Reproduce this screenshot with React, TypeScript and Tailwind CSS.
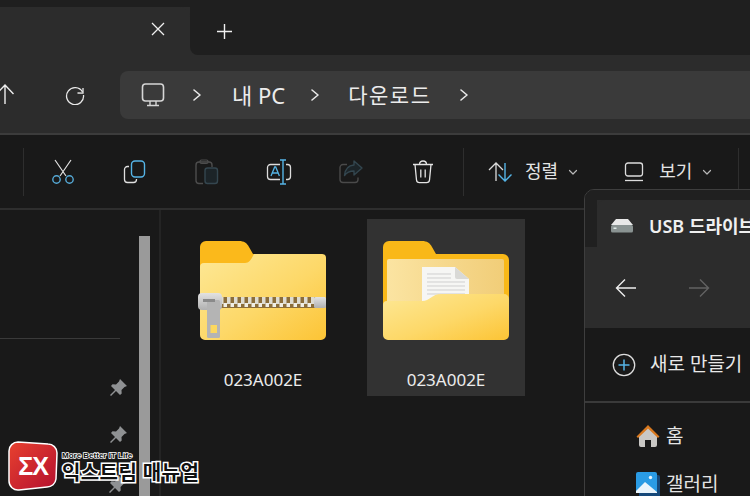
const sans = "font-['Noto_Sans','Noto_Sans_CJK_KR',sans-serif]";

function Chevron({ className = "" }: { className?: string }) {
  return (
    <svg width="10" height="14" viewBox="0 0 10 14" fill="none" className={className}>
      <path d="M2 2l6 5-6 5" stroke="#e8e8e8" strokeWidth="1.6" strokeLinecap="round" strokeLinejoin="round" />
    </svg>
  );
}

function SmallDown() {
  return (
    <svg width="10" height="7" viewBox="0 0 10 7" fill="none">
      <path d="M1.5 1.5L5 5l3.5-3.5" stroke="#b8b8b8" strokeWidth="1.2" strokeLinecap="round" strokeLinejoin="round" />
    </svg>
  );
}

function Divider() {
  return <div className="w-px h-[48px] bg-[#2e2e2e] shrink-0" />;
}

function Scissors() {
  return (
    <svg width="24" height="26" viewBox="0 0 24 26" fill="none">
      <path d="M4 1l11 16M20 1L9 17" stroke="#e0e0e0" strokeWidth="1.2" />
      <circle cx="5.5" cy="20.5" r="3.7" stroke="#55a9d6" strokeWidth="1.4" />
      <circle cx="18.5" cy="20.5" r="3.7" stroke="#55a9d6" strokeWidth="1.4" />
    </svg>
  );
}

function Copy() {
  return (
    <svg width="24" height="24" viewBox="0 0 24 24" fill="none">
      <path d="M6 6.5H4.5A3 3 0 0 0 1.5 9.5v10a3 3 0 0 0 3 3h6a3 3 0 0 0 3-3V19" stroke="#e0e0e0" strokeWidth="1.3" />
      <rect x="8.5" y="1" width="13" height="16" rx="3.5" stroke="#55b4e6" strokeWidth="1.4" />
    </svg>
  );
}

function Paste() {
  return (
    <svg width="24" height="26" viewBox="0 0 24 26" fill="none">
      <path d="M8 24.5H4a3 3 0 0 1-3-3V6a3 3 0 0 1 3-3h10a3 3 0 0 1 3 3v2" stroke="#4d4d4d" strokeWidth="1.4" />
      <rect x="5" y="1" width="8" height="3.5" rx="1.5" stroke="#4d4d4d" strokeWidth="1.2" />
      <rect x="10" y="9" width="12.5" height="15.5" rx="2.5" stroke="#34464f" strokeWidth="1.4" fill="#1c2428" />
    </svg>
  );
}

function Rename() {
  return (
    <svg width="26" height="26" viewBox="0 0 26 26" fill="none">
      <path d="M14 5.5H4.5a3 3 0 0 0-3 3v9a3 3 0 0 0 3 3H14M20 5.5h1.5a3 3 0 0 1 3 3v9a3 3 0 0 1-3 3H20" stroke="#dcdcdc" strokeWidth="1.3" />
      <path d="M14 1h6M17 1v24M14 25h6" stroke="#55b4e6" strokeWidth="1.4" />
      <path d="M5 17l3.7-9h1l3.7 9M6.3 14h6" stroke="#55b4e6" strokeWidth="1.3" />
    </svg>
  );
}

function Share() {
  return (
    <svg width="24" height="24" viewBox="0 0 24 24" fill="none">
      <path d="M8 4.500H4a3 3 0 0 0-3 3v12a3 3 0 0 0 3 3h12a3 3 0 0 0 3-3v-2" stroke="#4a4a4a" strokeWidth="1.4" />
      <path d="M15 1l8 7-8 7v-4c-4 0-7 1-9.500 4.500C6 10 9 5.500 15 5V1z" stroke="#33464f" strokeWidth="1.4" strokeLinejoin="round" fill="#1c2428" />
    </svg>
  );
}

function Trash() {
  return (
    <svg width="22" height="24" viewBox="0 0 22 24" fill="none">
      <path d="M1 4.500h20M7.500 4.500C7.500 2 9 1 11 1s3.500 1 3.500 3.500" stroke="#e4e4e4" strokeWidth="1.3" />
      <path d="M3 4.500l1.500 15.500a3 3 0 0 0 3 2.700h7a3 3 0 0 0 3-2.700L19 4.500" stroke="#e4e4e4" strokeWidth="1.3" />
      <path d="M8.800 9.500v8M13.200 9.500v8" stroke="#e4e4e4" strokeWidth="1.3" />
    </svg>
  );
}

function SortIcon() {
  return (
    <svg width="25" height="20" viewBox="0 0 25 20" fill="none">
      <path d="M8 19V1M1 8l7-7 7 7" stroke="#dcdcdc" strokeWidth="1.3" />
      <path d="M17 1v18M10.500 12.500l6.500 6.500 6.500-6.500" stroke="#55b4e6" strokeWidth="1.4" />
    </svg>
  );
}

function ViewIcon() {
  return (
    <svg width="20" height="20" viewBox="0 0 20 20" fill="none">
      <rect x="1.500" y="1" width="17" height="13" rx="2.500" stroke="#dcdcdc" strokeWidth="1.3" />
      <path d="M1 18.500h18" stroke="#dcdcdc" strokeWidth="1.3" />
    </svg>
  );
}

function Pin() {
  return (
    <svg width="18" height="18" viewBox="0 0 18 18" fill="#8f9193">
      <path d="M11 0l7 7-2.500 1-3 3 .2 3.500-1.700 1.500L7 12 2 17l-1-1 5-5-4-4 1.500-1.700L7 5.500l3-3z" />
    </svg>
  );
}

function ZipFolder() {
  return (
    <svg width="130" height="100" viewBox="-2 0 130 100" className="block">
      <defs>
        <linearGradient id="zipFront" x1="0" y1="0" x2="1" y2="1">
          <stop offset="0" stopColor="#fde896" />
          <stop offset="0.55" stopColor="#fdd868" />
          <stop offset="1" stopColor="#fcc435" />
        </linearGradient>
        <linearGradient id="metal" x1="0" y1="0" x2="0" y2="1">
          <stop offset="0" stopColor="#e2e2e2" />
          <stop offset="1" stopColor="#b0b0b0" />
        </linearGradient>
      </defs>
      <path d="M0 6a6 6 0 0 1 6-6h33c5 0 8 2 10 6l4 7h67a6 6 0 0 1 6 6v30H0z" fill="#fbb91b" />
      <path d="M0 26a4 4 0 0 1 4-4h41c4 0 6-3 9-9h68a4 4 0 0 1 4 4v77a5 5 0 0 1-5 5H5a5 5 0 0 1-5-5z" fill="url(#zipFront)" />
      <rect x="20" y="56" width="98" height="11" fill="#8b6d3a" />
      <path d="M20 59.500h98" stroke="#dedcd2" strokeWidth="7" strokeDasharray="3.500 3.500" />
      <path d="M20 64h98" stroke="#efeee6" strokeWidth="4" strokeDasharray="3.500 3.500" strokeDashoffset="3.500" />
      <rect x="114" y="56" width="12" height="11" rx="1.500" fill="url(#metal)" />
      <rect x="-2" y="52" width="24" height="17" rx="4" fill="url(#metal)" />
      <rect x="7" y="59" width="13" height="38" rx="1.500" fill="#b4b4b4" />
      <rect x="3" y="58" width="12" height="3" fill="#8a8a8a" />
      <rect x="10.500" y="84" width="6.500" height="8" fill="#fcd85e" />
    </svg>
  );
}

function OpenFolder() {
  return (
    <svg width="126" height="100" viewBox="0 0 126 100" className="block">
      <defs>
        <linearGradient id="openFront" x1="0" y1="0" x2="1" y2="1">
          <stop offset="0" stopColor="#fde896" />
          <stop offset="0.55" stopColor="#fdd868" />
          <stop offset="1" stopColor="#fcc435" />
        </linearGradient>
        <linearGradient id="paper" x1="0" y1="0" x2="1" y2="0">
          <stop offset="0" stopColor="#fbe4a2" />
          <stop offset="1" stopColor="#f1cd78" />
        </linearGradient>
      </defs>
      <path d="M0 6a6 6 0 0 1 6-6h33c5 0 8 2 10 6l4 7h67a6 6 0 0 1 6 6v60H0z" fill="#f9b818" />
      <rect x="4" y="18" width="117" height="50" rx="2" fill="url(#paper)" />
      <path d="M39 26h33l14 12v28H39z" fill="#f6f6f4" />
      <path d="M72 26l14 12H74a2 2 0 0 1-2-2z" fill="#d9d9d6" />
      <path d="M44 33h24M44 37h24M44 41h38M44 45h38M44 49h38M44 53h38" stroke="#cfcfcf" strokeWidth="1" />
      <path d="M0 64a4 4 0 0 1 4-4h35c8 0 10-7 19-7h63a5 5 0 0 1 5 5v36a5 5 0 0 1-5 5H5a5 5 0 0 1-5-5z" fill="url(#openFront)" />
    </svg>
  );
}

function DriveIcon() {
  return (
    <svg width="22" height="14" viewBox="0 0 22 14" fill="none">
      <path d="M5 0h12l5 6H0z" fill="#e8e8e8" />
      <rect y="6" width="22" height="7.500" rx="1.500" fill="#8a9392" />
      <rect x="2.500" y="8.500" width="3" height="1.500" fill="#dfe9e6" />
    </svg>
  );
}

function HomeIcon() {
  return (
    <svg width="24" height="24" viewBox="0 0 24 24" fill="none">
      <path d="M3 11.500L12 3l9 8.500V21a2 2 0 0 1-2 2h-4v-7H9v7H5a2 2 0 0 1-2-2z" fill="#c9c7c4" />
      <path d="M.5 12.500L12 1l11.500 11.500-1.500 1.500L12 4.500 2 14z" fill="#d9791f" />
    </svg>
  );
}

function GalleryIcon() {
  return (
    <svg width="24" height="24" viewBox="0 0 24 24" fill="none">
      <rect x="3" y="3" width="21" height="24" rx="2" fill="#16487a" />
      <rect width="21" height="21" rx="2" fill="#2a9be4" />
      <path d="M0 19l9-9 12 10v1H0z" fill="#eaf5fc" />
      <circle cx="14.500" cy="5.500" r="1.700" fill="#eaf5fc" />
    </svg>
  );
}

function Tile({ selected, children }: { selected?: boolean; children: React.ReactNode }) {
  return (
    <div className={`w-[158px] h-[177px] flex flex-col items-center pt-[22px] ${selected ? "bg-[#323232]" : ""}`}>
      <div className="h-[100px] flex justify-center">{children}</div>
      <div className="mt-[28px] text-[17px] leading-[22px] text-[#ececec]">023A002E</div>
    </div>
  );
}

export default function App() {
  return (
    <div className={`relative w-[750px] h-[496px] overflow-hidden bg-[#191919] ${sans}`}>
      {/* tab strip */}
      <div className="flex h-[55px] bg-[linear-gradient(#1f1f1f_7px,#2c2c2c_7px)]">
        <div className="w-[190px] h-[48px] mt-[7px] rounded-tr-[10px] bg-[#2c2c2c] flex items-center justify-end pr-[25px]">
          <svg width="14" height="14" viewBox="0 0 14 14" fill="none" className="mb-1">
            <path d="M1 1l12 12M13 1L1 13" stroke="#f0f0f0" strokeWidth="1.3" />
          </svg>
        </div>
        <div className="flex-1 bg-[#1f1f1f] rounded-bl-[8px] flex items-center pl-[27px] pt-[7px]">
          <svg width="15" height="15" viewBox="0 0 15 15" fill="none">
            <path d="M7.500 0v15M0 7.500h15" stroke="#f0f0f0" strokeWidth="1.4" />
          </svg>
        </div>
      </div>

      {/* nav bar */}
      <div className="relative h-[80px] pt-[2px] bg-[#2c2c2c] flex items-center pl-[120px] border-b-2 border-[#3c3c3c]">
        <svg width="20" height="20" viewBox="0 0 20 20" fill="none" className="absolute -left-[5px] top-[29px]">
          <path d="M10 20V1M1.500 10L10 1l8.500 9" stroke="#ededed" strokeWidth="1.4" />
        </svg>
        <svg width="20" height="20" viewBox="0 0 20 20" fill="none" className="absolute left-[65px] top-[30px]">
          <path d="M17.500 7A8.500 8.500 0 1 0 18.500 10" stroke="#e8e8e8" strokeWidth="1.3" />
          <path d="M12.500 3l5.500 .2V-2" stroke="#e8e8e8" strokeWidth="1.3" transform="translate(0 5)" />
        </svg>
        <div className="w-[630px] h-[48px] rounded-l-[8px] bg-[#3a3a3a] flex items-center text-[#ececec] leading-none">
          <svg width="24" height="24" viewBox="0 0 24 24" fill="none" className="ml-[21px]">
            <rect x="1.500" y="1" width="21" height="17" rx="3" stroke="#d6d6d6" strokeWidth="1.6" />
            <path d="M9 18v4M15 18v4M6 22.500h12" stroke="#d6d6d6" strokeWidth="1.4" />
          </svg>
          <Chevron className="ml-[27px]" />
          <span className="ml-[30px] text-[22px]">내 PC</span>
          <Chevron className="ml-[25px]" />
          <span className="ml-[28px] text-[21px] tracking-[1.5px]">다운로드</span>
          <Chevron className="ml-[28px]" />
        </div>
      </div>

      {/* command bar */}
      <div className="h-[75px] pl-[23px] flex items-center border-b-2 border-[#2e2e2e] text-[18px] text-[#e4e4e4]">
        <Divider />
        <div className="w-[3px]" />
        {[<Scissors key="cut" />, <Copy key="copy" />, <Paste key="paste" />, <Rename key="rename" />, <Share key="share" />, <Trash key="del" />].map((icon, i) => (
          <div key={i} className="w-[72px] flex justify-center">{icon}</div>
        ))}
        <div className="w-[4px]" />
        <Divider />
        <div className="ml-[24px] flex items-center">
          <SortIcon />
          <span className="ml-[12px]">정렬</span>
          <div className="ml-[10px] mt-[1px]"><SmallDown /></div>
        </div>
        <div className="ml-[46px] flex items-center">
          <ViewIcon />
          <span className="ml-[15px]">보기</span>
          <div className="ml-[10px] mt-[1px]"><SmallDown /></div>
        </div>
        <div className="ml-[26px]"><Divider /></div>
      </div>

      {/* body */}
      <div className="flex h-[286px]">
        <div className="w-[159px] shrink-0 relative">
          <div className="absolute left-0 top-[128px] w-[120px] h-px bg-[#3a3a3a]" />
          <div className="absolute left-[139px] top-[26px] bottom-0 w-[11px] bg-[#9a9a9a]" />
          <div className="absolute left-[109px] top-[169px]"><Pin /></div>
          <div className="absolute left-[109px] top-[216px]"><Pin /></div>
          <div className="absolute left-[108px] top-[266px]"><Pin /></div>
        </div>
        <div className="w-[2px] bg-[#242424] shrink-0" />
        <div className="flex gap-[25px] pl-[23px] pt-[9px]">
          <Tile><ZipFolder /></Tile>
          <Tile selected><OpenFolder /></Tile>
        </div>
      </div>

      {/* second window */}
      <div className="absolute left-[584px] top-[189px] w-[190px] h-[320px] rounded-tl-[10px] border border-[#3e3e3e] bg-[#191919] overflow-hidden">
        <div className="h-[138px] bg-[#2c2c2c] flex flex-col">
          <div className="h-[10px] bg-[#202020]" />
          <div className="flex flex-1">
            <div className="w-[12px] bg-[linear-gradient(#202020_47px,#2c2c2c_47px)]" />
            <div className="flex-1 rounded-tl-[8px] bg-[#2c2c2c] flex flex-col">
              <div className="h-[52px] flex items-center pl-[14px]">
                <DriveIcon />
                <span className="ml-[16px] text-[18px] font-semibold text-[#f0f0f0] whitespace-nowrap">USB 드라이브</span>
              </div>
              <div className="flex items-center pl-[18px] mt-[26px] gap-[51px]">
                <svg width="22" height="20" viewBox="0 0 22 20" fill="none">
                  <path d="M21 10H2M10 1.500L1.500 10l8.500 8.500" stroke="#ededed" strokeWidth="1.4" />
                </svg>
                <svg width="22" height="20" viewBox="0 0 22 20" fill="none">
                  <path d="M1 10h19M12 1.500l8.500 8.500-8.500 8.500" stroke="#626262" strokeWidth="1.4" />
                </svg>
              </div>
            </div>
          </div>
        </div>
        <div className="h-[75px] border-b-2 border-[#3a3a3a] flex items-center pl-[27px] text-[19px] text-[#e8e8e8]">
          <svg width="24" height="24" viewBox="0 0 24 24" fill="none" className="shrink-0">
            <circle cx="12" cy="12" r="10.700" stroke="#dcdcdc" strokeWidth="1.3" />
            <path d="M12 6.500v11M6.500 12h11" stroke="#55b4e6" strokeWidth="1.5" />
          </svg>
          <span className="ml-[14px] whitespace-nowrap">새로 만들기</span>
        </div>
        <div className="pl-[51px] pt-[21px] flex flex-col gap-[24px] text-[19px] text-[#e4e4e4]">
          <div className="flex items-center h-[24px]">
            <HomeIcon />
            <span className="ml-[6px]">홈</span>
          </div>
          <div className="flex items-center h-[24px]">
            <GalleryIcon />
            <span className="ml-[6px]">갤러리</span>
          </div>
        </div>
      </div>

      {/* watermark */}
      <div className="absolute left-[8px] top-[441px] flex items-center">
        <div className="relative w-[50px] h-[50px]">
          <svg width="50" height="50" viewBox="0 0 50 50" className="absolute inset-0">
            <defs>
              <linearGradient id="badge" x1="0" y1="0" x2="1" y2="1">
                <stop offset="0" stopColor="#e8412f" />
                <stop offset="1" stopColor="#b3102f" />
              </linearGradient>
            </defs>
            <path d="M10 1L40 3a9 9 0 0 1 9 9l-1 26a9 9 0 0 1-9 8L11 49a9 9 0 0 1-10-9V10a9 9 0 0 1 9-9z" fill="url(#badge)" stroke="#fff" strokeWidth="1.500" />
          </svg>
          <span className="absolute inset-0 flex items-center justify-center font-['Liberation_Sans',sans-serif] font-bold text-[25px] leading-none text-white tracking-[-1px]">ΣX</span>
        </div>
        <div className="ml-[4px] mt-[3px] flex flex-col">
          <span className="h-[10px] font-['Liberation_Sans',sans-serif] text-[8px] leading-[10px] font-bold text-[#111] whitespace-nowrap [-webkit-text-stroke:1.5px_white] [paint-order:stroke_fill]">More Better IT Life</span>
          <span className="h-[24px] text-[20px] leading-[24px] tracking-[0.4px] font-bold text-[#111] whitespace-nowrap [-webkit-text-stroke:3px_white] [paint-order:stroke_fill]">익스트림 매뉴얼</span>
        </div>
      </div>
    </div>
  );
}
